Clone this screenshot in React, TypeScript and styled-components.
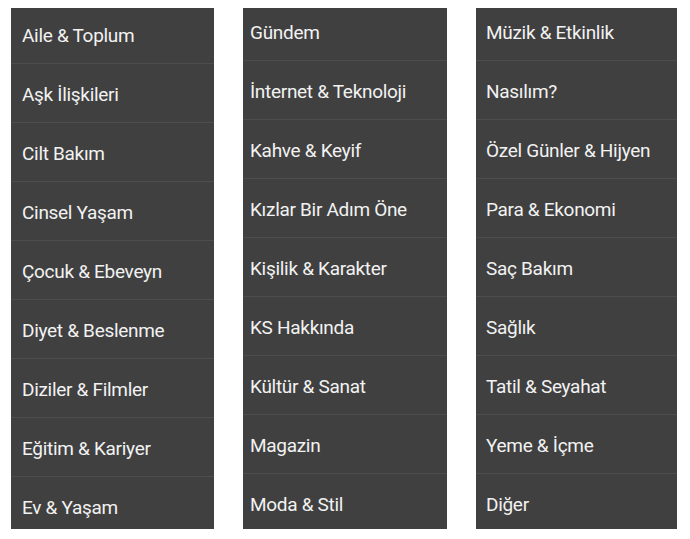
import React from 'react'
import styled, { createGlobalStyle } from 'styled-components'

const columns: { offset: number; inset: number; items: string[] }[] = [
    {
        offset: -3,
        inset: 11,
        items: [
            'Aile & Toplum',
            'Aşk İlişkileri',
            'Cilt Bakım',
            'Cinsel Yaşam',
            'Çocuk & Ebeveyn',
            'Diyet & Beslenme',
            'Diziler & Filmler',
            'Eğitim & Kariyer',
            'Ev & Yaşam',
        ],
    },
    {
        offset: -6,
        inset: 7,
        items: [
            'Gündem',
            'İnternet & Teknoloji',
            'Kahve & Keyif',
            'Kızlar Bir Adım Öne',
            'Kişilik & Karakter',
            'KS Hakkında',
            'Kültür & Sanat',
            'Magazin',
            'Moda & Stil',
        ],
    },
    {
        offset: -6,
        inset: 10,
        items: [
            'Müzik & Etkinlik',
            'Nasılım?',
            'Özel Günler & Hijyen',
            'Para & Ekonomi',
            'Saç Bakım',
            'Sağlık',
            'Tatil & Seyahat',
            'Yeme & İçme',
            'Diğer',
        ],
    },
]

export default function App() {
    return (
        <>
            <GlobalStyle />
            <Page>
                {columns.map((col, i) => (
                    <Column key={i}>
                        <List $offset={col.offset}>
                            {col.items.map((item) => (
                                <Item key={item} $inset={col.inset}>
                                    {item}
                                </Item>
                            ))}
                        </List>
                    </Column>
                ))}
            </Page>
        </>
    )
}

const GlobalStyle = createGlobalStyle`
    body {
        margin: 0;
        background: #ffffff;
        font-family: Roboto, "Liberation Sans", sans-serif;
    }
`

const Page = styled.div`
    display: grid;
    grid-template-columns: 203px 204px 201px;
    column-gap: 29px;
    padding: 8px 0 0 11px;
`

const Column = styled.div`
    height: 521px;
    overflow: hidden;
    background: #404040;
`

const List = styled.ul<{ $offset: number }>`
    list-style: none;
    margin: ${(p) => p.$offset}px 0 0;
    padding: 0;
`

const Item = styled.li<{ $inset: number }>`
    height: 59px;
    box-sizing: border-box;
    display: flex;
    align-items: center;
    padding: 3px 0 0 ${(p) => p.$inset}px;
    border-bottom: 1px solid #4d4d4d;
    color: #f2f2f2;
    font-size: 19px;
    letter-spacing: -0.3px;
`
